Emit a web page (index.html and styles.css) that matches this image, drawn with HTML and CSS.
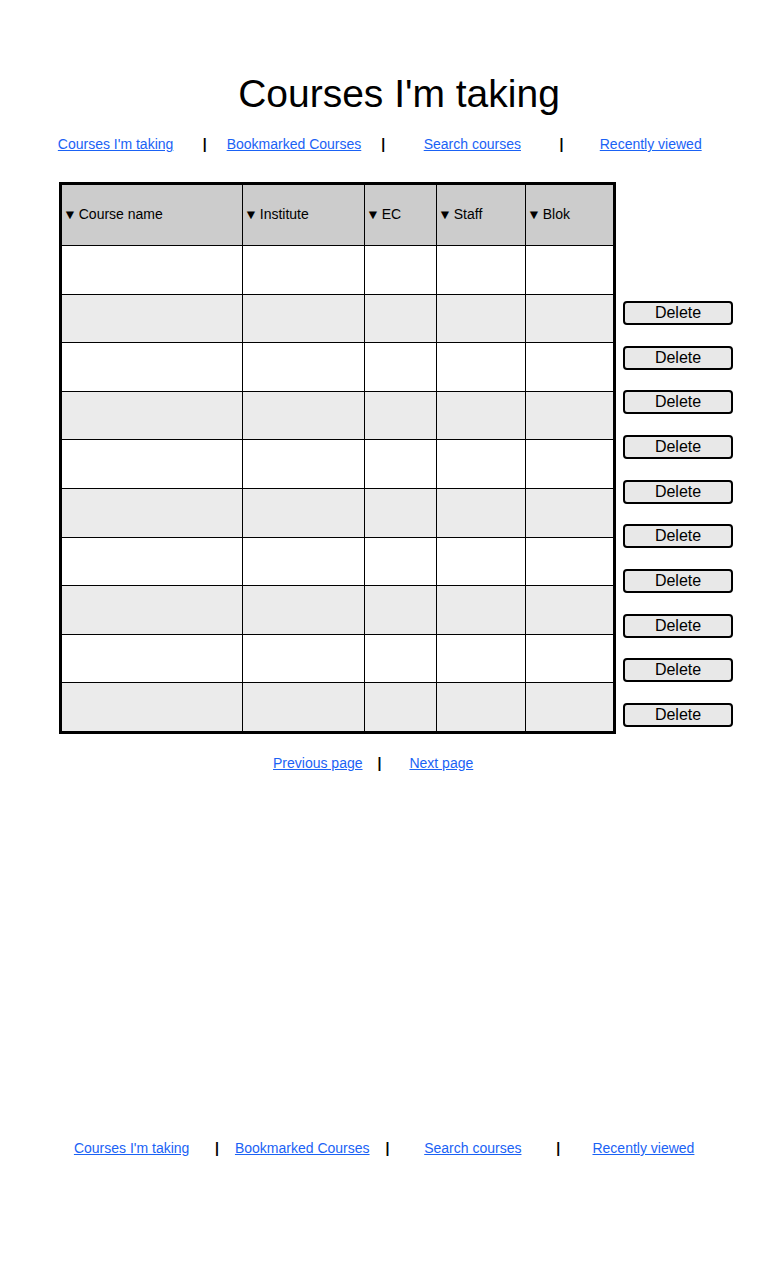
FILE: index.html
```html
<!DOCTYPE html>
<html lang="en">
<head>
<meta charset="utf-8">
<title>Courses I'm taking</title>
<link rel="stylesheet" href="styles.css">
</head>
<body>
<h1 class="title">Courses I'm taking</h1>
<nav class="nav nav-top">
  <div class="cell"><a href="#">Courses I'm taking</a></div>
  <div class="cell sep">|</div>
  <div class="cell"><a href="#">Bookmarked Courses</a></div>
  <div class="cell sep">|</div>
  <div class="cell"><a href="#">Search courses</a></div>
  <div class="cell sep">|</div>
  <div class="cell"><a href="#">Recently viewed</a></div>
</nav>

<div class="main">
  <table class="courses">
    <colgroup>
      <col class="c1"><col class="c2"><col class="c3"><col class="c4"><col class="c5">
    </colgroup>
    <thead>
      <tr>
        <th><span class="tri">▼</span> Course name</th>
        <th><span class="tri">▼</span> Institute</th>
        <th><span class="tri">▼</span> EC</th>
        <th><span class="tri">▼</span> Staff</th>
        <th><span class="tri">▼</span> Blok</th>
      </tr>
    </thead>
    <tbody>
      <tr><td></td><td></td><td></td><td></td><td></td></tr>
      <tr class="alt"><td></td><td></td><td></td><td></td><td></td></tr>
      <tr><td></td><td></td><td></td><td></td><td></td></tr>
      <tr class="alt"><td></td><td></td><td></td><td></td><td></td></tr>
      <tr><td></td><td></td><td></td><td></td><td></td></tr>
      <tr class="alt"><td></td><td></td><td></td><td></td><td></td></tr>
      <tr><td></td><td></td><td></td><td></td><td></td></tr>
      <tr class="alt"><td></td><td></td><td></td><td></td><td></td></tr>
      <tr><td></td><td></td><td></td><td></td><td></td></tr>
      <tr class="alt"><td></td><td></td><td></td><td></td><td></td></tr>
    </tbody>
  </table>
  <div class="actions">
    <button class="del">Delete</button>
    <button class="del">Delete</button>
    <button class="del">Delete</button>
    <button class="del">Delete</button>
    <button class="del">Delete</button>
    <button class="del">Delete</button>
    <button class="del">Delete</button>
    <button class="del">Delete</button>
    <button class="del">Delete</button>
    <button class="del">Delete</button>
  </div>
</div>

<div class="pager">
  <a href="#">Previous page</a>
  <span class="sep pager-sep">|</span>
  <a href="#">Next page</a>
</div>

<nav class="nav nav-bottom">
  <div class="cell"><a href="#">Courses I'm taking</a></div>
  <div class="cell sep">|</div>
  <div class="cell"><a href="#">Bookmarked Courses</a></div>
  <div class="cell sep">|</div>
  <div class="cell"><a href="#">Search courses</a></div>
  <div class="cell sep">|</div>
  <div class="cell"><a href="#">Recently viewed</a></div>
</nav>
</body>
</html>
```

FILE: styles.css
```css
html, body {
  margin: 0;
  padding: 0;
  background: #ffffff;
}
body {
  font-family: "Liberation Sans", Arial, sans-serif;
  color: #000;
  width: 760px;
}
a {
  color: #1a62f5;
  text-decoration: underline;
}
.title {
  margin: 0;
  padding-top: 72px;
  font-size: 39px;
  line-height: 44px;
  font-weight: normal;
  text-align: center;
  padding-left: 38px;
}
.nav {
  display: grid;
  font-size: 14px;
  line-height: 16px;
}
.nav .cell {
  display: flex;
  justify-content: center;
  white-space: nowrap;
}
.nav-top {
  margin-top: 20px;
  margin-left: 71px;
  grid-template-columns: repeat(7, 89.2px);
}
.nav-bottom {
  margin-top: 369px;
  margin-left: 89px;
  grid-template-columns: repeat(7, 85.3px);
}
.sep {
  font-weight: bold;
  color: #000;
}
.main {
  display: flex;
  align-items: flex-start;
  margin-top: 30px;
  margin-left: 59px;
}
.courses {
  border-collapse: collapse;
  border: 3px solid #000;
  table-layout: fixed;
  width: 556px;
}
.c1 { width: 182px; }
.c2 { width: 122px; }
.c3 { width: 72px; }
.c4 { width: 89px; }
.c5 { width: 89px; }
.courses th,
.courses td {
  border: 1px solid #000;
  padding: 0;
}
.courses th {
  background: #cccccc;
  height: 58px;
  padding-bottom: 2px;
  font-size: 14px;
  font-weight: normal;
  text-align: left;
  padding-left: 1px;
  white-space: nowrap;
}
.tri {
  font-size: 14px;
  display: inline-block;
  margin-right: -2px;
  transform: scaleY(0.95);
}
.courses td {
  height: 47.6px;
}
.courses tr.alt td {
  background: #ebebeb;
}
.actions {
  display: flex;
  flex-direction: column;
  gap: 20.67px;
  padding-top: 119px;
  margin-left: 7px;
}
.del {
  width: 110px;
  height: 24px;
  box-sizing: border-box;
  border: 2px solid #000;
  border-radius: 4px;
  background: #e8e8e8;
  font-family: "Liberation Sans", Arial, sans-serif;
  font-size: 16px;
  color: #000;
  padding: 0;
  line-height: 20px;
}
.pager {
  display: flex;
  font-size: 14px;
  line-height: 16px;
  margin-top: 21px;
  margin-left: 273px;
  white-space: nowrap;
}
.pager-sep {
  margin-left: 15px;
  margin-right: 28px;
}
```
